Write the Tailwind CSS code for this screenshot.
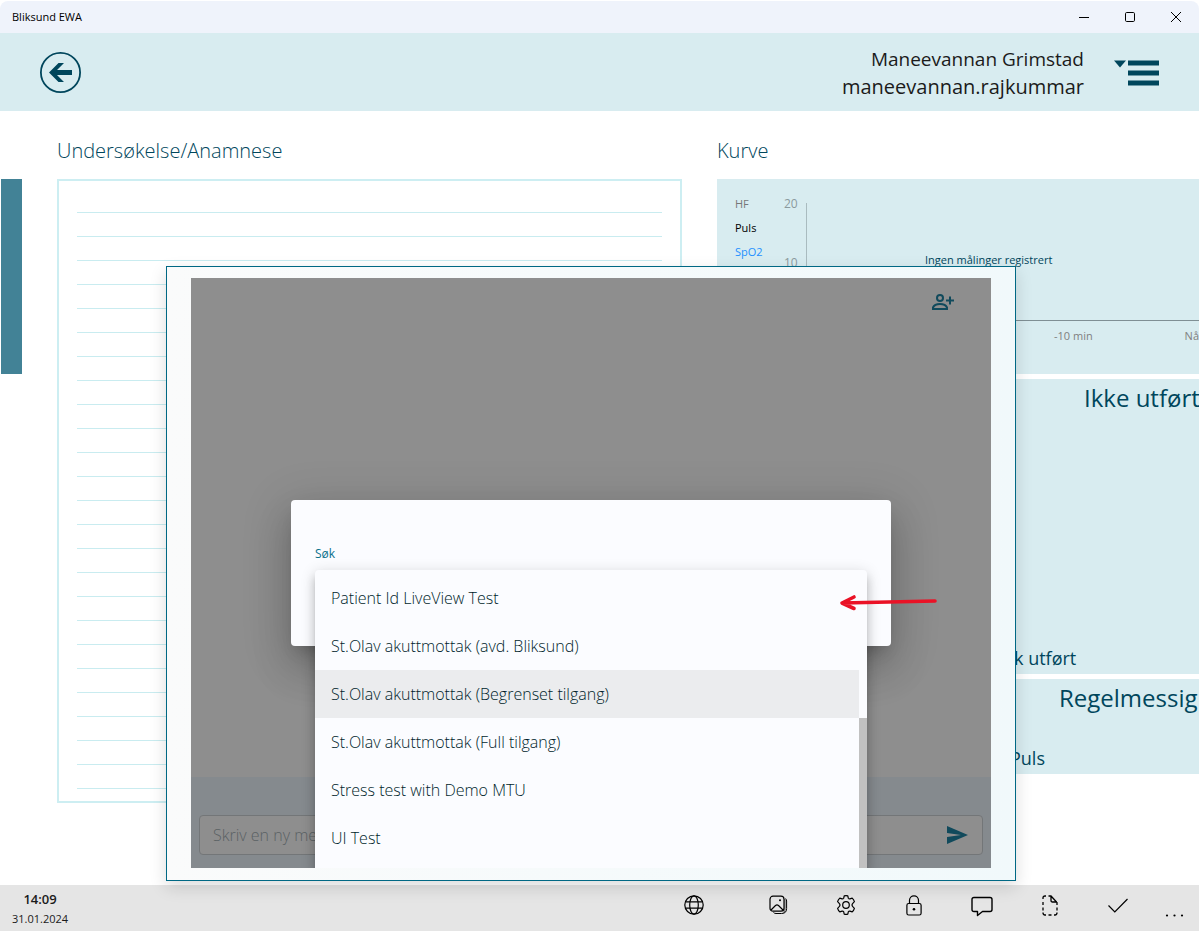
<!DOCTYPE html>
<html lang="nb">
<head>
<meta charset="utf-8">
<meta name="viewport" content="width=device-width, initial-scale=1">
<title>Bliksund EWA</title>
<script src="https://cdn.jsdelivr.net/npm/@tailwindcss/browser@4"></script>
</head>
<body class="bg-white font-['Open_Sans','Noto_Sans',sans-serif] text-[#00465c]">
<div class="relative flex min-h-screen flex-col overflow-hidden pt-px pr-0.5 pb-0.5">

  <!-- Title bar -->
  <div class="flex h-8 shrink-0 items-center justify-between rounded-t-lg bg-[#eff3fb] pl-3 text-black">
    <span class="text-[11px]">Bliksund EWA</span>
    <div class="flex h-full">
      <button aria-label="Minimer" class="flex w-[46px] items-center justify-center"><svg width="10" height="11" viewBox="0 0 10 11" stroke="currentColor" fill="none"><path d="M0 5.5h10"/></svg></button>
      <button aria-label="Maksimer" class="flex w-[46px] items-center justify-center"><svg width="10" height="10" viewBox="0 0 10 10" stroke="currentColor" fill="none"><rect x="0.5" y="0.5" width="9" height="9" rx="1.2"/></svg></button>
      <button aria-label="Lukk" class="flex w-[46px] items-center justify-center"><svg width="10" height="10" viewBox="0 0 10 10" stroke="currentColor" fill="none"><path d="M0 0l10 10M10 0L0 10"/></svg></button>
    </div>
  </div>

  <!-- Header -->
  <header class="flex h-[78px] shrink-0 items-center justify-between bg-[#d8ecf0] pr-10 pl-10">
    <button aria-label="Tilbake"><svg width="41" height="41" viewBox="0 0 41 41" fill="none"><circle cx="20.5" cy="20.5" r="19.6" stroke="#00465c" stroke-width="1.8"/><path d="M9 20.5L18.5 11H24L17 18H32V23H17L24 30H18.5Z" fill="#00465c"/></svg></button>
    <div class="flex items-center gap-[30px] pt-0.5">
      <div class="text-right leading-7 text-[#1b1b1b]">
        <div class="text-[19px]">Maneevannan Grimstad</div>
        <div class="text-[20px]">maneevannan.rajkummar</div>
      </div>
      <button aria-label="Meny"><svg width="45" height="26" viewBox="0 0 45 26" fill="#00465c"><path d="M0 0.5H12L6 7.5Z"/><path d="M14 0.5h31v5H14zM14 10.5h31v5H14zM14 20.5h31v5H14z"/></svg></button>
    </div>
  </header>

  <!-- Main content -->
  <main class="flex flex-1 gap-[35px] pl-px">
    <div class="mt-[68px] h-[195px] w-[21px] shrink-0 bg-[#428296]"></div>
    <section class="flex w-[625px] shrink-0 flex-col pt-[26px]">
      <h2 class="text-[20px] leading-7 font-light"><label for="notes">Undersøkelse/Anamnese</label></h2>
      <div class="mt-3.5 h-[624px] border-2 border-[#cdeef2] px-[18px] pt-2">
        <textarea id="notes" class="block h-[600px] w-full resize-none bg-[repeating-linear-gradient(to_bottom,transparent_0px,transparent_23px,#c9ecf0_23px,#c9ecf0_24px)] leading-6 outline-none"></textarea>
      </div>
    </section>
    <section class="flex min-w-0 flex-1 flex-col overflow-hidden pt-[26px]">
      <h2 class="text-[20px] leading-7 font-light">Kurve</h2>
      <div class="mt-3.5 flex flex-col gap-[5px]">
        <div class="grid h-[195px] grid-cols-[49px_22px_1fr] bg-[#d8ecf0] pt-[13px] pl-[18px] text-[11px] leading-6">
          <div>
            <div class="text-[#777]">HF</div>
            <div class="text-black">Puls</div>
            <div class="text-[#1e90ff]">SpO2</div>
          </div>
          <div class="flex flex-col gap-[35px] text-[12px] text-[#8b9a9e]"><span>20</span><span>10</span></div>
          <div class="min-w-0 pt-[11px]">
            <div class="h-[118px] border-b border-l border-b-[#7f8f94] border-l-[#a9bbbf] pt-[45px] pl-[118px] whitespace-nowrap">Ingen målinger registrert</div>
            <div class="flex justify-between pt-[3px] pl-[248px] whitespace-nowrap text-[#808080]"><span>-10 min</span><span>Nå</span></div>
          </div>
        </div>
        <div class="flex h-[295px] flex-col justify-between overflow-hidden bg-[#d8ecf0] pt-px whitespace-nowrap">
          <div class="pl-[367px] text-[24px] leading-9">Ikke utført</div>
          <div class="pl-[297px] text-[18px] leading-8">k utført</div>
        </div>
        <div class="flex h-[95px] flex-col justify-between overflow-hidden bg-[#d8ecf0] pt-px whitespace-nowrap">
          <div class="pl-[342px] text-[24px] leading-9">Regelmessig</div>
          <div class="pl-[293px] text-[18px] leading-8">Puls</div>
        </div>
      </div>
    </section>
  </main>

  <!-- Status bar -->
  <footer class="flex h-[46px] shrink-0 items-center justify-between bg-[#e5e5e5] pr-[3px] pl-3 text-[#1b1b1b]">
    <div class="pt-px text-center leading-5">
      <div class="text-[13px] font-semibold">14:09</div>
      <div class="text-[11px]">31.01.2024</div>
    </div>
    <div class="flex h-full pb-1.5 text-black">
      <button aria-label="Nettverk" class="mr-4 flex w-[68px] items-center justify-center"><svg width="20" height="20" viewBox="0 0 20 20" fill="none" stroke="currentColor" stroke-width="1.2"><circle cx="10" cy="10" r="9.2"/><ellipse cx="10" cy="10" rx="4.3" ry="9.2"/><path d="M1.6 6.8h16.8M1.6 13.2h16.8"/></svg></button>
      <button aria-label="Bilder" class="flex w-[68px] items-center justify-center"><svg width="19" height="20" viewBox="0 0 19 20" fill="none" stroke="currentColor" stroke-width="1.2"><rect x="1" y="1.2" width="14" height="15" rx="3"/><path d="M2 15l4.500-4.500q1.500-1.200 3 0L14 15"/><circle cx="11" cy="5.200" r="1" fill="currentColor" stroke="none"/><path d="M16.600 3.500q1 1 1 2.500v7.500q0 5-5 5H7q-1.500 0-2.500-1" stroke-width="1"/><path d="M16 4v11q0 2-2 2.500" stroke-width="0.600"/></svg></button>
      <button aria-label="Innstillinger" class="flex w-[68px] items-center justify-center"><svg width="20" height="20" viewBox="0 0 20 20" fill="none" stroke="currentColor" stroke-width="1.2" stroke-linejoin="round"><path d="M8.200 0.900Q10 0.500 11.800 0.900L12.300 3.200Q12.800 4 13.900 3.900L16.200 3.100Q17.800 4.600 18.400 6.700L16.800 8.300Q16 9.200 16 10Q16 10.800 16.800 11.700L18.400 13.300Q17.800 15.400 16.200 16.900L13.900 16.100Q12.800 16 12.300 16.800L11.800 19.100Q10 19.500 8.200 19.100L7.700 16.800Q7.200 16 6.100 16.100L3.800 16.900Q2.200 15.400 1.600 13.300L3.200 11.700Q4 10.800 4 10Q4 9.200 3.200 8.300L1.600 6.700Q2.200 4.600 3.800 3.100L6.100 3.900Q7.200 4 7.700 3.200Z"/><circle cx="10" cy="10" r="3.300"/></svg></button>
      <button aria-label="Lås" class="flex w-[68px] items-center justify-center"><svg width="16" height="21" viewBox="0 0 16 21" fill="none" stroke="currentColor" stroke-width="1.2"><rect x="0.900" y="8.500" width="14.200" height="11.500" rx="1.800"/><path d="M3.500 8.500V5.300a4.500 4.500 0 0 1 9 0v3.200"/><circle cx="8" cy="14.200" r="1.300" fill="currentColor" stroke="none"/></svg></button>
      <button aria-label="Meldinger" class="flex w-[68px] items-center justify-center pt-0.5"><svg width="22" height="21" viewBox="0 0 22 21" fill="none" stroke="currentColor" stroke-width="1.400" stroke-linejoin="round"><path d="M3 1.500h16q2 0 2 2v10q0 2-2 2h-7.500L6.500 19.500V15.500H3q-2 0-2-2v-10q0-2 2-2z"/></svg></button>
      <button aria-label="Dokument" class="flex w-[68px] items-center justify-center"><svg width="16" height="21" viewBox="0 0 16 21" fill="none" stroke="currentColor" stroke-width="1.300"><path d="M4 1H3Q1 1 1 3v1M1 7v3M1 12.500v3M1 17.500q0 2.500 2 2.500h1M6.500 20h3M12 20h1q2 0 2-2.500M15 15.500v-3M15 10V7.500L9 1H6.500M9 1v4.500q0 1.500 1.500 1.500H15"/></svg></button>
      <button aria-label="Fullfør" class="flex w-[68px] items-center justify-center"><svg width="20" height="15" viewBox="0 0 20 15" fill="none" stroke="currentColor" stroke-width="1.200"><path d="M0.500 7.500L6.800 13.800L19.500 1"/></svg></button>
      <button aria-label="Mer" class="flex w-11 items-center justify-center pt-5"><svg width="19" height="3" viewBox="0 0 19 3" fill="currentColor"><circle cx="2" cy="1.500" r="1.100"/><circle cx="9.500" cy="1.500" r="1.100"/><circle cx="17" cy="1.500" r="1.100"/></svg></button>
    </div>
  </footer>

  <!-- Chat window over the page -->
  <div class="absolute top-[266px] left-[166px] w-[850px] border border-[#006884] bg-linear-to-r from-[#fafbfb] to-[#f1f9fb] px-6 pt-[11px] pb-3 shadow-[0_6px_16px_rgba(0,0,0,0.14)]">
    <div class="relative flex h-[590px] flex-col overflow-hidden bg-[#8e8e8e]">
      <div class="flex flex-1 items-start justify-end pt-3.5 pr-9">
        <button aria-label="Legg til deltaker" class="text-[#114a5c]"><svg width="24" height="20" viewBox="0 0 24 20" fill="none" stroke="currentColor" stroke-width="2"><circle cx="9" cy="6" r="3"/><path d="M2 17v-1.500Q3.500 12 9 12t7 3.500V17z"/><path d="M19 4.500v8M15 8.500h8"/></svg></button>
      </div>
      <div class="h-[91px] bg-[#858a8e] px-2 pt-[38px]">
        <div class="flex h-10 items-center rounded border border-[#737678] bg-[#8e8e8e] pr-3.5 pl-[13px]">
          <input aria-label="Skriv en ny melding" placeholder="Skriv en ny melding" class="min-w-0 flex-1 bg-transparent text-[16px] font-light outline-none placeholder:text-[#5a6164]">
          <button aria-label="Send" class="text-[#114a5c]"><svg width="21" height="18" viewBox="0 0 21 18" fill="currentColor"><path d="M0 0L21 9L0 18V11L14 9L0 7Z"/></svg></button>
        </div>
      </div>

      <!-- Search dialog -->
      <div role="dialog" aria-label="Søk" class="absolute top-[222px] left-[100px] h-[146px] w-[600px] rounded bg-[#fbfcff] px-6 pt-11 shadow-[0_11px_15px_-7px_rgba(0,0,0,0.2),0_24px_38px_3px_rgba(0,0,0,0.14),0_9px_46px_8px_rgba(0,0,0,0.12)]">
        <label for="search" class="block text-[12px] leading-5 text-[#0b718c]">Søk</label>
        <input id="search" class="block h-7 w-full outline-none">
      </div>

      <!-- Suggestions -->
      <div class="absolute top-[292px] left-[124px] flex h-[298px] w-[552px] overflow-hidden rounded-t bg-[#fbfcff] shadow-[0_5px_5px_-3px_rgba(0,0,0,0.2),0_8px_10px_1px_rgba(0,0,0,0.14),0_3px_14px_2px_rgba(0,0,0,0.12)]">
        <div role="listbox" aria-label="Søkeresultater" class="flex flex-1 flex-col pt-1 text-[16px] font-light text-[#001e2b]">
          <button role="option" class="h-12 px-4 text-left">Patient Id LiveView Test</button>
          <button role="option" class="h-12 px-4 text-left">St.Olav akuttmottak (avd. Bliksund)</button>
          <button role="option" aria-selected="true" class="h-12 bg-[#ebecee] px-4 text-left">St.Olav akuttmottak (Begrenset tilgang)</button>
          <button role="option" class="h-12 px-4 text-left">St.Olav akuttmottak (Full tilgang)</button>
          <button role="option" class="h-12 px-4 text-left">Stress test with Demo MTU</button>
          <button role="option" class="h-12 px-4 text-left">UI Test</button>
        </div>
        <div class="w-2 pt-[148px]"><div class="h-full bg-[#c1c1c1]"></div></div>
      </div>
    </div>
  </div>

  <!-- Annotation arrow -->
  <svg class="absolute top-[594px] left-[838px]" width="102" height="18" viewBox="0 0 102 18" fill="none" stroke="#ea1226" stroke-width="3.600" stroke-linecap="round" stroke-linejoin="round"><path d="M97 7L4 9M16 3L4 9L16 14.500"/></svg>
</div>
</body>
</html>
